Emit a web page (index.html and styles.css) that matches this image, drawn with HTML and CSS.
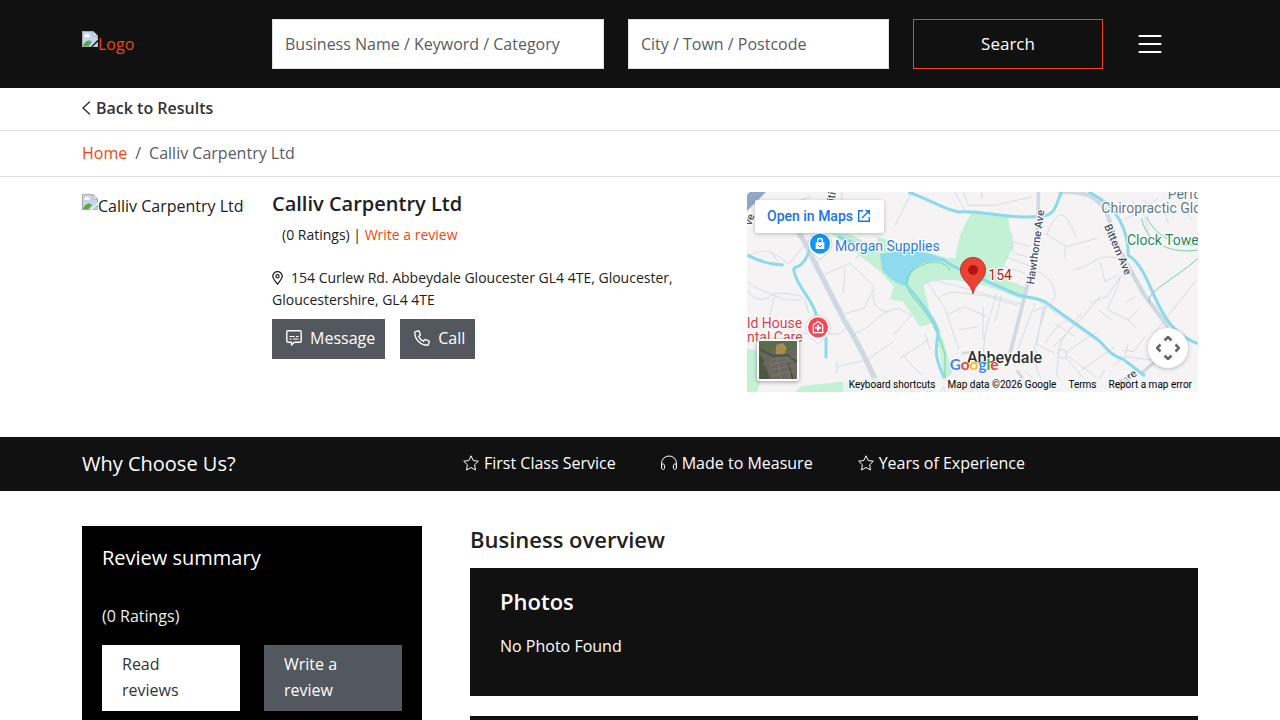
FILE: index.html
```html
<!DOCTYPE html>
<html lang="en">
<head>
    <meta charset="UTF-8">
    <meta name="viewport" content="width=device-width, initial-scale=1.0">
    <title>Calliv Carpentry Ltd</title>
    <link rel="stylesheet" href="styles.css">
</head>
<body>
    <svg class="sprite" aria-hidden="true">
        <symbol id="broken" viewBox="0 0 16 16">
            <path d="M0 0h11l5 5v3.500L8.500 16H0z" fill="#c3d4f5"/>
            <path d="M2.500 6a1.500 1.500 0 0 1 1-2.200 2 2 0 0 1 3.500 0A1.200 1.200 0 0 1 7 6z" fill="#fff"/>
            <path d="M1 15c1-3 3-5.500 5.500-5.500 1.500 0 2.500.6 3.500 1.500L6.500 15z" fill="#56ad35"/>
            <path d="M.5 15.500V.5H11" fill="none" stroke="#a8a8a8"/>
            <path d="M11 .5v4.500h4.500z" fill="#fff" stroke="#a8a8a8"/>
            <path d="M15.500 5v3M.5 15.500h7M10.500 16l5.500-5v5z" fill="#c3d4f5" stroke="#a8a8a8"/>
        </symbol>
        <symbol id="star" viewBox="0 0 16 16">
            <path d="M8 .8l2.200 4.700 5.100.7-3.700 3.600.9 5.200L8 12.500 3.500 15l.9-5.200L.7 6.200l5.100-.7z" fill="none" stroke="currentColor" stroke-linejoin="round"/>
        </symbol>
    </svg>

    <header class="header">
        <form class="container search">
            <a class="logo" href="#"><svg class="broken"><use href="#broken"/></svg>Logo</a>
            <input type="text" aria-label="Business" placeholder="Business Name / Keyword / Category">
            <input type="text" aria-label="Location" placeholder="City / Town / Postcode">
            <button class="search-btn" type="button">Search</button>
            <button class="menu-btn" type="button" aria-label="Menu">
                <svg width="24" height="20" viewBox="0 0 24 20"><path d="M1.500 2h21M1.500 10h21M1.500 18h21" stroke="#fff" stroke-width="2.200" stroke-linecap="round"/></svg>
            </button>
        </form>
    </header>

    <div class="back">
        <div class="container">
            <a href="#"><svg width="10" height="16" viewBox="0 0 10 16"><path d="M7.500 2L1 8l6.500 6" fill="none" stroke="currentColor" stroke-width="1.500" stroke-linecap="round" stroke-linejoin="round"/></svg>Back to Results</a>
        </div>
    </div>

    <nav class="crumbs" aria-label="Breadcrumb">
        <div class="container">
            <a href="#">Home</a><span>/</span><span>Calliv Carpentry Ltd</span>
        </div>
    </nav>

    <main>
        <section class="container profile">
            <div class="photo"><svg class="broken"><use href="#broken"/></svg>Calliv Carpentry Ltd</div>
            <div class="details">
                <h1>Calliv Carpentry Ltd</h1>
                <p class="rating">(0 Ratings) | <a href="#">Write a review</a></p>
                <p class="address"><svg width="11" height="14" viewBox="0 0 11 14"><path d="M5.500 13.200C3 10 .8 7.600.8 5.300a4.700 4.700 0 0 1 9.400 0c0 2.300-2.200 4.700-4.700 7.900z" fill="none" stroke="currentColor" stroke-width="1.300"/><circle cx="5.500" cy="5.200" r="1.600" fill="none" stroke="currentColor" stroke-width="1.200"/></svg>154 Curlew Rd. Abbeydale Gloucester GL4 4TE, Gloucester, Gloucestershire, GL4 4TE</p>
                <div class="actions">
                    <button type="button"><svg width="16" height="16" viewBox="0 0 16 16"><path d="M2 .8h12c.7 0 1.200.5 1.200 1.200v9c0 .7-.5 1.200-1.200 1.200H8.500L5.500 15v-2.800H2c-.7 0-1.200-.5-1.200-1.200V2C.8 1.300 1.300.8 2 .8z" fill="none" stroke="currentColor" stroke-width="1.400" stroke-linejoin="round"/><path d="M3.500 6.500h5M10 6.500h2.500M3.500 9h2M7 9h5.500" stroke="currentColor" stroke-width="1.200"/></svg>Message</button>
                    <button type="button"><svg width="16" height="16" viewBox="0 0 16 16"><path d="M1.500 1.700L4 .8c.5-.1.900.1 1.100.5l1.200 2.900c.2.400.1.800-.2 1.100L4.700 6.500c.9 2 2.400 3.600 4.700 4.700l1.300-1.400c.3-.3.700-.4 1.100-.2l2.900 1.200c.4.200.6.600.5 1.100l-.7 2.500c-.1.500-.5.800-1 .8C6.600 15.200.8 9.300.8 2.700c0-.5.200-.9.700-1z" fill="none" stroke="currentColor" stroke-width="1.400" stroke-linejoin="round"/></svg>Call</button>
                </div>
            </div>
            <div class="map">
                <svg class="map-tiles" viewBox="6 6 1353 600" preserveAspectRatio="xMidYMid slice">
                    <rect x="6" y="6" width="1353" height="600" fill="#f5f3f4"/>
                    <g fill="#c3f1d5">
                        <path d="M255 128l60 5 82 42 0-35 210 64 25 0c5-60 30-110 50-138l110 8c-5 40 15 70 12 100l-45 85 84 33-8 36-110-40-90-17-70-2-30 16 20 80 40 85 27 100-26 18c-10-60-10-110-36-168l-35 10-50-75-40-7 12-38-47-50z"/>
                        <path d="M6 475l40 10v90l-10 31H6zM150 606l20-18 140-14 40 32z"/>
                    </g>
                    <path d="M405 192l90-12c50 8 90 18 115 35-50-5-115-5-122 75-30-10-60-22-78-54z" fill="#90daee"/>
                    <g class="lane">
                        <path d="M6 35c50 10 90 12 155-5M6 200c50-30 80-15 125 22l50-60M75 180l30 45M6 275c40 30 80 40 120 55h45M255 165l-40 55M235 255l80-35c40 40 70 60 72 75l-30 60-72 20M300 235l-5 75M330 205l50-35 60 15M500 6l-50 100"/>
                        <path d="M290 6v80M6 300c20 35 60 35 80 10 60 0 90 5 95 25l10 35M90 310l-18 80M90 430h120M225 435l60-5 20-15M330 430c60-20 60-60 130-75l40 20-55 60M385 310c0 40 10 50 45 55M275 530l90-20 80-55M275 515v35M480 495c0 20 30 35 50 60M465 505l85-55M540 430l15 50"/>
                        <path d="M528 290c10-10 30-20 50-18l250 70M545 275l55 80 42 125M580 325c40-30 60-15 140-8l100 30M605 375l55-25 65 30M640 420l60-10M715 350l-2 100M755 310l-35 120-5 60M770 315l-20 80"/>
                        <path d="M6 20c90 30 110 30 190 0M630 6l35 65M655 6l15 40 80 0 110-25M710 6v20M785 150l70 20M780 200l80 30M765 225l75 25M800 130l5 60 40 10M905 135c20-60 45-70 60-50l30 55M900 130l65 40 90-25M960 170v35M985 240c80-20 60-50 140-35M1065 215l15 60 40-20M870 240c40 20 60 40 60 80l-10 20"/>
                        <path d="M870 325l220 150M1065 320l-50 60-90 90M1035 340l50-20 45-65M1125 260c-10 60-40 80-35 100l60 30 30-30M1060 360l40 30M1145 385l30 30M1170 320l-30 20M1215 150l-15-70-40-50M1140 90l100-65M1250 40l20 60M1340 90l-30-50M1350 275l-135 170M1220 510l-80-10-40 30M1140 500l10-40M1200 440l-35 45-30-5M1190 30l40 25"/>
                        <path d="M870 340l-60 160M865 365l30-15-20 110M905 345l-15 50M900 350l-35 140M1010 370l-60 80-10 40M930 400l60 40M900 460c20-30 40-60 70-70M875 480c-10 60 10 90 50 120M970 500l70 50 50 50M965 485l90-60M1010 540l100-70M940 500l-5 55 40 50M930 490l-60-30M960 500l60 70-30 36M1080 540l-30 45M840 545l60 50M690 490l-50 50"/>
                    </g>
                    <circle cx="952" cy="492" r="13" fill="none" stroke="#dadde0" stroke-width="4"/>
                    <g class="road">
                        <path d="M880 6c0 100-5 180-30 270l-55 215"/>
                        <path d="M940 6c90-5 135 20 155 90 20 90 80 170 100 215l75 100" stroke-width="13"/>
                        <path d="M815 540l45 65M650 490l40-5" stroke-width="8"/>
                        <path d="M90 50c60 50 90 100 110 150l100 195c45 70 75 140 110 215" stroke-width="16"/>
                        <path d="M1190 550l40-35" stroke-width="10"/>
                    </g>
                    <path d="M-10 55L60-15" stroke="#91a7c3" stroke-width="34"/>
                    <path d="M615 240c-30-40-70-20-95-10-60 30-30 80 0 110 40 45 70 110 80 155v70M1190 85c10 60 70 110 169 95M1205 80c20 50 80 90 154 85M1215 340c-20-30 70-70 144-135" fill="none" stroke="#79cfa0" stroke-width="3"/>
                    <g class="water">
                        <path d="M490 6c60 20 100 50 150 60 80-5 160 25 255 12 40-5 40-45 55-72"/>
                        <path d="M280 140c20 10 35 15 50 20M590 205c20 20 50 30 70 40l160 70c30 10 50 5 80 20l160 115c25 25 35 45 75 58l65 50"/>
                        <path d="M1030 6c90 40 120 120 120 190 50 30 70 120 105 175 20 35 50 70 104 90"/>
                        <path d="M6 195c40 20 70 30 110 30M145 235c25-5 40-25 50-60M145 235c10 60 60 90 70 145M243 440v65M480 280c50 60 100 120 100 150-15 70 0 90 20 140"/>
                    </g>
                    <g class="label">
                        <text class="blue" x="270" y="183">Morgan Supplies</text>
                        <text class="slate" x="1268" y="27">Perfo</text>
                        <text class="slate" x="1069" y="69">Chiropractic Glo</text>
                        <text class="green" x="1146" y="165">Clock Tower</text>
                        <text class="red" x="6" y="415">ld House</text>
                        <text class="red" x="6" y="455">ntal Care</text>
                        <text class="dark" x="730" y="270">154</text>
                        <text class="street" transform="translate(867 284) rotate(-82)">Hawthorne Ave</text>
                        <text class="street" transform="translate(1077 108) rotate(67)">Bittern Ave</text>
                        <text class="street" transform="translate(18 108) rotate(-70)">ve</text>
                        <text class="street" transform="translate(268 35) rotate(-80)">iti</text>
                        <text class="street" transform="translate(1120 600) rotate(-38)">ldare</text>
                        <text class="faded" x="400" y="616">Gloucester Academy</text>
                        <text class="town" x="666" y="519">Abbeydale</text>
                    </g>
                    <path d="M225 208l-22-18a36 36 0 1 1 44 0z" fill="#fff" stroke="#c5c7ca" stroke-width="2"/>
                    <circle cx="225" cy="161" r="30" fill="#0f94f8"/>
                    <path d="M212 157h26v20h-26z" fill="#fff"/>
                    <path d="M218 158v-6a7 7 0 0 1 14 0v6" fill="none" stroke="#fff" stroke-width="4"/>
                    <path d="M219 165c2 6 10 6 12 0" fill="none" stroke="#0f94f8" stroke-width="3"/>
                    <path d="M219 460l-22-17a37 37 0 1 1 44 0z" fill="#fff" stroke="#c5c7ca" stroke-width="2"/>
                    <circle cx="219" cy="412" r="30" fill="#fa4556"/>
                    <path d="M205 428v-23l14-11 14 11v23z" fill="none" stroke="#fff" stroke-width="4"/>
                    <path d="M219 404v18M210 413h18" stroke="#fff" stroke-width="6"/>
                    <path d="M684 312c-5-31-38-42-38-72a38 38 0 0 1 76 0c0 30-33 41-38 72z" fill="#ea4335" stroke="#b31412" stroke-width="2"/>
                    <circle cx="684" cy="240" r="15" fill="#b31412"/>
                    <text class="google" x="614" y="540"><tspan fill="#4285f4">G</tspan><tspan fill="#ea4335">o</tspan><tspan fill="#fbbc04">o</tspan><tspan fill="#4285f4">g</tspan><tspan fill="#34a853">l</tspan><tspan fill="#ea4335">e</tspan></text>
                </svg>
                <a class="open-maps" href="#">Open in Maps<svg width="14" height="14" viewBox="0 0 14 14"><path d="M6 1.700H1.700v10.600h10.600V8M8.500 1.700h3.800v3.800M12.300 1.700L5 9" fill="none" stroke="currentColor" stroke-width="1.400"/></svg></a>
                <button class="satellite" type="button" aria-label="Show satellite imagery">
                    <svg width="38" height="38" viewBox="0 0 38 38">
                        <rect width="38" height="38" fill="#6b6760"/>
                        <path d="M0 0h38v7L27 11 14 8 8 14 0 13z" fill="#5b6b4b"/>
                        <path d="M17 4l7-2 4 5-3 7-8-1z" fill="#a58b52"/>
                        <path d="M0 13l5 6-1 8 6 11H0z" fill="#4a5842"/>
                        <path d="M0 8l14 7 14-1 10 7M5 25l5 13M28 20l6 18" fill="none" stroke="#48553f" stroke-width="2"/>
                        <path d="M11 19l26-3M10 24l24-5M12 29l24-5M14 34l22-4M18 16l4 22M27 15l4 23" fill="none" stroke="#817c76" stroke-dasharray="2 1"/>
                    </svg>
                </button>
                <button class="camera" type="button" aria-label="Map camera controls">
                    <svg width="24" height="24" viewBox="0 0 24 24"><path d="M8.500 4.500L12 1l3.500 3.500M8.500 19.500L12 23l3.500-3.500M4.500 8.500L1 12l3.500 3.500M19.500 8.500L23 12l-3.500 3.500" fill="none" stroke="#666" stroke-width="2.600"/></svg>
                </button>
                <div class="map-terms">
                    <button type="button">Keyboard shortcuts</button>
                    <span>Map data ©2026 Google</span>
                    <a href="#">Terms</a>
                    <a href="#">Report a map error</a>
                </div>
            </div>
        </section>

        <section class="why">
            <div class="container">
                <h2>Why Choose Us?</h2>
                <ul>
                    <li><svg width="16" height="16"><use href="#star"/></svg>First Class Service</li>
                    <li><svg width="16" height="16" viewBox="0 0 16 16"><path d="M.6 13V8a7.400 7 0 0 1 14.800 0v5" fill="none" stroke="currentColor"/><path d="M.6 10.500c0-1 .7-1.500 1.500-1.500s1.500.7 1.500 1.500V13c0 .8-.7 1.500-1.500 1.500S.6 13.800.6 13zM15.400 10.500c0-1-.7-1.500-1.500-1.500s-1.500.7-1.500 1.500V13c0 .8.7 1.500 1.500 1.500s1.500-.7 1.500-1.500z" fill="none" stroke="currentColor"/></svg>Made to Measure</li>
                    <li><svg width="16" height="16"><use href="#star"/></svg>Years of Experience</li>
                </ul>
            </div>
        </section>

        <div class="container content">
            <aside class="summary">
                <h2>Review summary</h2>
                <p>(0 Ratings)</p>
                <div class="summary-links">
                    <a class="read" href="#">Read reviews</a>
                    <a class="write" href="#">Write a review</a>
                </div>
            </aside>
            <section class="overview">
                <h2>Business overview</h2>
                <div class="card">
                    <h3>Photos</h3>
                    <p>No Photo Found</p>
                </div>
                <div class="card"></div>
            </section>
        </div>
    </main>
</body>
</html>
```
FILE: styles.css
```css
* {
    box-sizing: border-box;
}
html {
    scrollbar-width: none;
}
body {
    margin: 0;
    font-family: "Open Sans", sans-serif;
    font-size: 16px;
    line-height: 26px;
    color: #212121;
    background-color: #fff;
}
h1, h2, h3, p, ul {
    margin: 0;
    padding: 0;
}
a {
    color: #f04712;
    text-decoration: none;
}
button, input {
    font: inherit;
}
button {
    cursor: pointer;
}
.sprite {
    position: absolute;
    width: 0;
    height: 0;
}
.container {
    width: 100%;
    max-width: 1140px;
    margin: 0 auto;
    padding: 0 12px;
}
.broken {
    width: 16px;
    height: 16px;
    flex: none;
}

/* header */
.header {
    background-color: #111;
    padding: 19px 0;
}
.search {
    display: grid;
    grid-template-columns: 166fr 332fr 261fr 190fr 71fr;
    gap: 24px;
    align-items: center;
}
.logo {
    display: flex;
}
.search input {
    width: 100%;
    height: 50px;
    padding: 0 12px;
    border: 1px solid #dee2e6;
    background-color: #fff;
}
.search input::placeholder {
    color: #595c5f;
    opacity: 1;
}
.search-btn {
    height: 50px;
    border: 1px solid #f04712;
    background-color: transparent;
    color: #fff;
    font-size: 17px;
    font-weight: 500;
}
.menu-btn {
    display: flex;
    padding: 0 11px;
    border: 0;
    background: none;
}

/* back link and breadcrumb */
.back {
    padding: 7px 0 9px;
    border-bottom: 1px solid #dee2e6;
}
.back a {
    display: flex;
    align-items: center;
    gap: 4px;
    color: #333;
    font-weight: 600;
}
.crumbs {
    padding: 9px 0 10px;
    border-bottom: 1px solid #dee2e6;
    color: #595c5f;
}
.crumbs .container {
    display: flex;
    gap: 8px;
}

/* profile */
.profile {
    display: grid;
    grid-template-columns: 166fr 451fr 451fr;
    gap: 24px;
    padding-top: 15px;
    padding-bottom: 45px;
}
.photo {
    display: flex;
    padding-top: 2px;
    line-height: 24px;
    white-space: nowrap;
}
.details {
    font-size: 14px;
    line-height: 22px;
}
.details h1 {
    font-size: 20px;
    line-height: 24px;
    font-weight: 600;
}
.rating {
    padding: 8px 10px 21px;
}
.address svg {
    margin-right: 8px;
    vertical-align: -2px;
}
.actions {
    display: flex;
    gap: 15px;
    margin-top: 8px;
}
.actions button {
    display: flex;
    align-items: center;
    gap: 8px;
    height: 40px;
    padding: 0 10px 2px 14px;
    border: 0;
    background-color: #53575e;
    color: #fff;
    font-size: 16px;
    font-weight: 500;
}

/* map */
.map {
    position: relative;
    height: 200px;
    overflow: hidden;
    font-family: Roboto, sans-serif;
}
.map-tiles {
    display: block;
    width: 100%;
    height: 100%;
}
.lane {
    fill: none;
    stroke: #d5dde5;
    stroke-width: 3;
}
.road {
    fill: none;
    stroke: #d1d9e0;
    stroke-width: 11;
}
.water {
    fill: none;
    stroke: #8bdaec;
    stroke-width: 9;
}
.label {
    font-size: 42px;
    stroke: #fff;
    stroke-width: 7px;
    stroke-linejoin: round;
    paint-order: stroke;
}
.blue { fill: #2b78e4; }
.slate { fill: #5f7787; }
.green { fill: #198a5b; }
.red { fill: #dc3c4e; }
.dark { fill: #b92020; }
.street {
    font-size: 33px;
    font-weight: 500;
    fill: #46566b;
}
.faded {
    font-size: 36px;
    fill: #b5bcc3;
}
.town {
    font-size: 48px;
    font-weight: 500;
    fill: #2d3033;
}
.google {
    font-family: Lato, sans-serif;
    font-size: 46px;
    font-weight: 700;
    stroke: #fff;
    stroke-width: 4px;
    paint-order: stroke;
}
.open-maps {
    position: absolute;
    top: 8px;
    left: 8px;
    display: flex;
    align-items: center;
    gap: 4px;
    height: 33px;
    padding: 0 13px 1px 12px;
    border-radius: 2px;
    background-color: #fff;
    box-shadow: 0 1px 4px rgba(0, 0, 0, 0.25);
    color: #1a73e8;
    font-size: 14px;
    font-weight: 500;
}
.satellite {
    position: absolute;
    left: 10px;
    bottom: 11px;
    display: flex;
    padding: 0;
    border: 2px solid #fff;
    border-radius: 3px;
    background-color: #fff;
    box-shadow: 0 1px 4px rgba(0, 0, 0, 0.35);
}
.camera {
    position: absolute;
    right: 10px;
    bottom: 24px;
    display: flex;
    align-items: center;
    justify-content: center;
    width: 40px;
    height: 40px;
    padding: 0;
    border: 0;
    border-radius: 50%;
    background-color: #fff;
    box-shadow: 0 1px 4px rgba(0, 0, 0, 0.25);
}
.map-terms {
    position: absolute;
    right: 0;
    bottom: 0;
    display: flex;
    gap: 12px;
    padding: 0 6px;
    background-color: rgba(245, 245, 245, 0.7);
    font-size: 10px;
    line-height: 14px;
    color: #000;
}
.map-terms a, .map-terms button {
    padding: 0;
    border: 0;
    background: none;
    color: inherit;
}

/* why choose us */
.why {
    background-color: #111;
    color: #fff;
    font-weight: 500;
}
.why .container {
    display: grid;
    grid-template-columns: 1fr 2fr;
    align-items: center;
    min-height: 54px;
}
.why h2, .summary h2 {
    font-size: 20px;
    line-height: 24px;
    font-weight: 500;
}
.why ul {
    display: flex;
    gap: 45px;
    padding: 0 0 2px 9px;
    list-style: none;
}
.why li {
    display: flex;
    align-items: center;
    gap: 5px;
}

/* content */
.content {
    display: grid;
    grid-template-columns: 340fr 728fr;
    gap: 48px;
    padding-top: 35px;
}
.summary {
    padding: 20px;
    background-color: #000;
    color: #fff;
}
.summary p {
    margin: 33px 0 16px;
    color: #eee;
    font-weight: 500;
}
.summary-links {
    display: grid;
    grid-template-columns: 1fr 1fr;
    gap: 24px;
}
.summary-links a {
    padding: 6px 20px 8px;
}
.read {
    background-color: #fff;
    color: #333;
}
.write {
    background-color: #53575e;
    color: #fff;
    font-weight: 500;
}
.overview h2, .overview h3 {
    font-size: 22px;
    line-height: 26px;
    font-weight: 600;
}
.overview h2 {
    margin-bottom: 16px;
}
.card {
    min-height: 128px;
    margin-bottom: 20px;
    padding: 20px 30px;
    background-color: #111;
    color: #fff;
}
.card p {
    margin-top: 19px;
    font-weight: 500;
}
```
